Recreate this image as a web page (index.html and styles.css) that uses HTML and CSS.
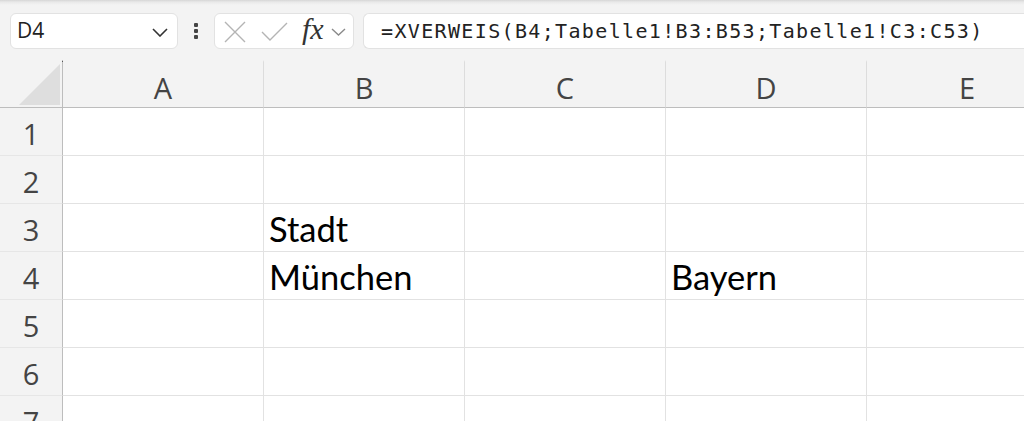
FILE: index.html
```html
<!DOCTYPE html>
<html lang="de">
<head>
<meta charset="utf-8">
<title>XVERWEIS</title>
<link rel="stylesheet" href="styles.css">
</head>
<body>
<div class="app">
  <div class="formula-bar">
    <div class="name-box">
      <span class="name-text">D4</span>
      <svg class="chev" width="16" height="9" viewBox="0 0 16 9"><path d="M1 1 L8 8 L15 1" fill="none" stroke="#333" stroke-width="1.6"/></svg>
    </div>
    <div class="dots"><span></span><span></span><span></span></div>
    <div class="fx-box">
      <svg class="icon-x" width="22" height="22" viewBox="0 0 22 22"><path d="M1 1 L21 21 M21 1 L1 21" fill="none" stroke="#b4b4b4" stroke-width="1.4"/></svg>
      <svg class="icon-check" width="28" height="20" viewBox="0 0 28 20"><path d="M1 10 L9 18 L26 1" fill="none" stroke="#b4b4b4" stroke-width="1.4"/></svg>
      <span class="fx">fx</span>
      <svg class="chev-small" width="15" height="8" viewBox="0 0 15 8"><path d="M1 1 L7.5 7 L14 1" fill="none" stroke="#8a8a8a" stroke-width="1.4"/></svg>
    </div>
    <div class="formula-input">=XVERWEIS(B4;Tabelle1!B3:B53;Tabelle1!C3:C53)</div>
  </div>
  <div class="sheet">
    <div class="corner"><span class="tri"></span><span class="dot"></span></div>
    <div class="col-head">A</div>
    <div class="col-head">B</div>
    <div class="col-head">C</div>
    <div class="col-head">D</div>
    <div class="col-head">E</div>

    <div class="row-head">1</div>
    <div class="cell"></div><div class="cell"></div><div class="cell"></div><div class="cell"></div><div class="cell"></div>

    <div class="row-head">2</div>
    <div class="cell"></div><div class="cell"></div><div class="cell"></div><div class="cell"></div><div class="cell"></div>

    <div class="row-head">3</div>
    <div class="cell"></div><div class="cell">Stadt</div><div class="cell"></div><div class="cell"></div><div class="cell"></div>

    <div class="row-head">4</div>
    <div class="cell"></div><div class="cell">München</div><div class="cell"></div><div class="cell">Bayern</div><div class="cell"></div>

    <div class="row-head">5</div>
    <div class="cell"></div><div class="cell"></div><div class="cell"></div><div class="cell"></div><div class="cell"></div>

    <div class="row-head">6</div>
    <div class="cell"></div><div class="cell"></div><div class="cell"></div><div class="cell"></div><div class="cell"></div>

    <div class="row-head">7</div>
    <div class="cell"></div><div class="cell"></div><div class="cell"></div><div class="cell"></div><div class="cell"></div>
  </div>
</div>
</body>
</html>
```

FILE: styles.css
```css
* { box-sizing: border-box; }
html, body {
  margin: 0;
  padding: 0;
  width: 1024px;
  height: 421px;
  overflow: hidden;
  background: #f3f3f3;
}
.app {
  width: 1024px;
  height: 421px;
  overflow: hidden;
  display: flex;
  flex-direction: column;
}
.formula-bar {
  height: 60px;
  flex: none;
  display: flex;
  align-items: flex-start;
  padding: 13px 0 0 10px;
  background: linear-gradient(to bottom, #d6d6d6 0px, #e9e9e9 2px, #f3f3f3 5px, #f3f3f3 100%);
}
.name-box {
  width: 168px;
  height: 36px;
  background: #fff;
  border: 1px solid #e2e2e2;
  border-radius: 6px;
  display: flex;
  align-items: center;
  justify-content: space-between;
  padding: 0 9px 0 6px;
}
.name-text {
  font-family: "Open Sans", "Noto Sans", sans-serif;
  font-size: 21px;
  color: #222;
  line-height: 1;
  padding-bottom: 2px;
}
.chev { display: block; margin-top: 2px; }
.dots {
  width: 36px;
  height: 36px;
  display: flex;
  flex-direction: column;
  align-items: center;
  justify-content: center;
  gap: 2px;
}
.dots span {
  width: 4px;
  height: 4px;
  border-radius: 1px;
  background: #444;
}
.fx-box {
  width: 140px;
  height: 36px;
  background: #fff;
  border: 1px solid #e2e2e2;
  border-radius: 6px;
  display: flex;
  align-items: center;
  padding-left: 9px;
}
.icon-x { display: block; margin-top: 2px; }
.icon-check { display: block; margin-left: 15px; margin-top: 2px; }
.fx {
  font-family: "Liberation Serif", "DejaVu Serif", serif;
  font-style: italic;
  font-size: 30px;
  color: #333;
  margin-left: 13px;
  line-height: 1;
  padding-bottom: 4px;
}
.chev-small { display: block; margin-left: 7px; margin-top: 1px; }
.formula-input {
  flex: 1 0 auto;
  margin-left: 9px;
  height: 36px;
  background: #fff;
  border: 1px solid #e2e2e2;
  border-right: none;
  border-radius: 6px 0 0 6px;
  display: flex;
  align-items: center;
  padding-left: 17px;
  font-family: "DejaVu Sans Mono", "Liberation Mono", monospace;
  font-size: 20px;
  letter-spacing: 1.35px;
  color: #222;
  white-space: nowrap;
}
.sheet {
  flex: none;
  display: grid;
  grid-template-columns: 63px repeat(5, 201px);
  grid-template-rows: 48px repeat(7, 48px);
  width: 1068px;
  background: #fff;
}
.corner {
  position: relative;
  background: #f3f3f3;
  border-right: 1px solid #bdbdbd;
  border-bottom: 1px solid #bdbdbd;
}
.corner .tri {
  position: absolute;
  left: 19px;
  top: 4px;
  width: 41px;
  height: 41px;
  background: #dedede;
  clip-path: polygon(100% 0, 100% 100%, 0 100%);
}
.corner .dot {
  position: absolute;
  right: -1px;
  top: 1px;
  width: 1px;
  height: 1px;
  background: #555;
}
.col-head {
  background: #f3f3f3;
  border-top: 2px solid #f3f3f3;
  border-bottom: 1px solid #bdbdbd;
  border-right: 1px solid #dcdcdc;
  display: flex;
  align-items: center;
  justify-content: center;
  font-family: "Open Sans", "Noto Sans", sans-serif;
  font-size: 29px;
  color: #444;
  padding-top: 5px;
}
.row-head {
  background: #f3f3f3;
  border-right: 1px solid #bdbdbd;
  border-bottom: 1px solid #e6e6e6;
  display: flex;
  align-items: center;
  justify-content: center;
  font-family: "Open Sans", "Noto Sans", sans-serif;
  font-size: 29px;
  color: #444;
  padding-top: 3px;
}
.cell {
  border-right: 1px solid #e2e2e2;
  border-bottom: 1px solid #e2e2e2;
  font-family: "Lato", "Liberation Sans", sans-serif;
  font-size: 34.5px;
  color: #000;
  padding-left: 5px;
  display: flex;
  align-items: flex-end;
  padding-bottom: 5px;
  white-space: nowrap;
  line-height: 1;
}
```
